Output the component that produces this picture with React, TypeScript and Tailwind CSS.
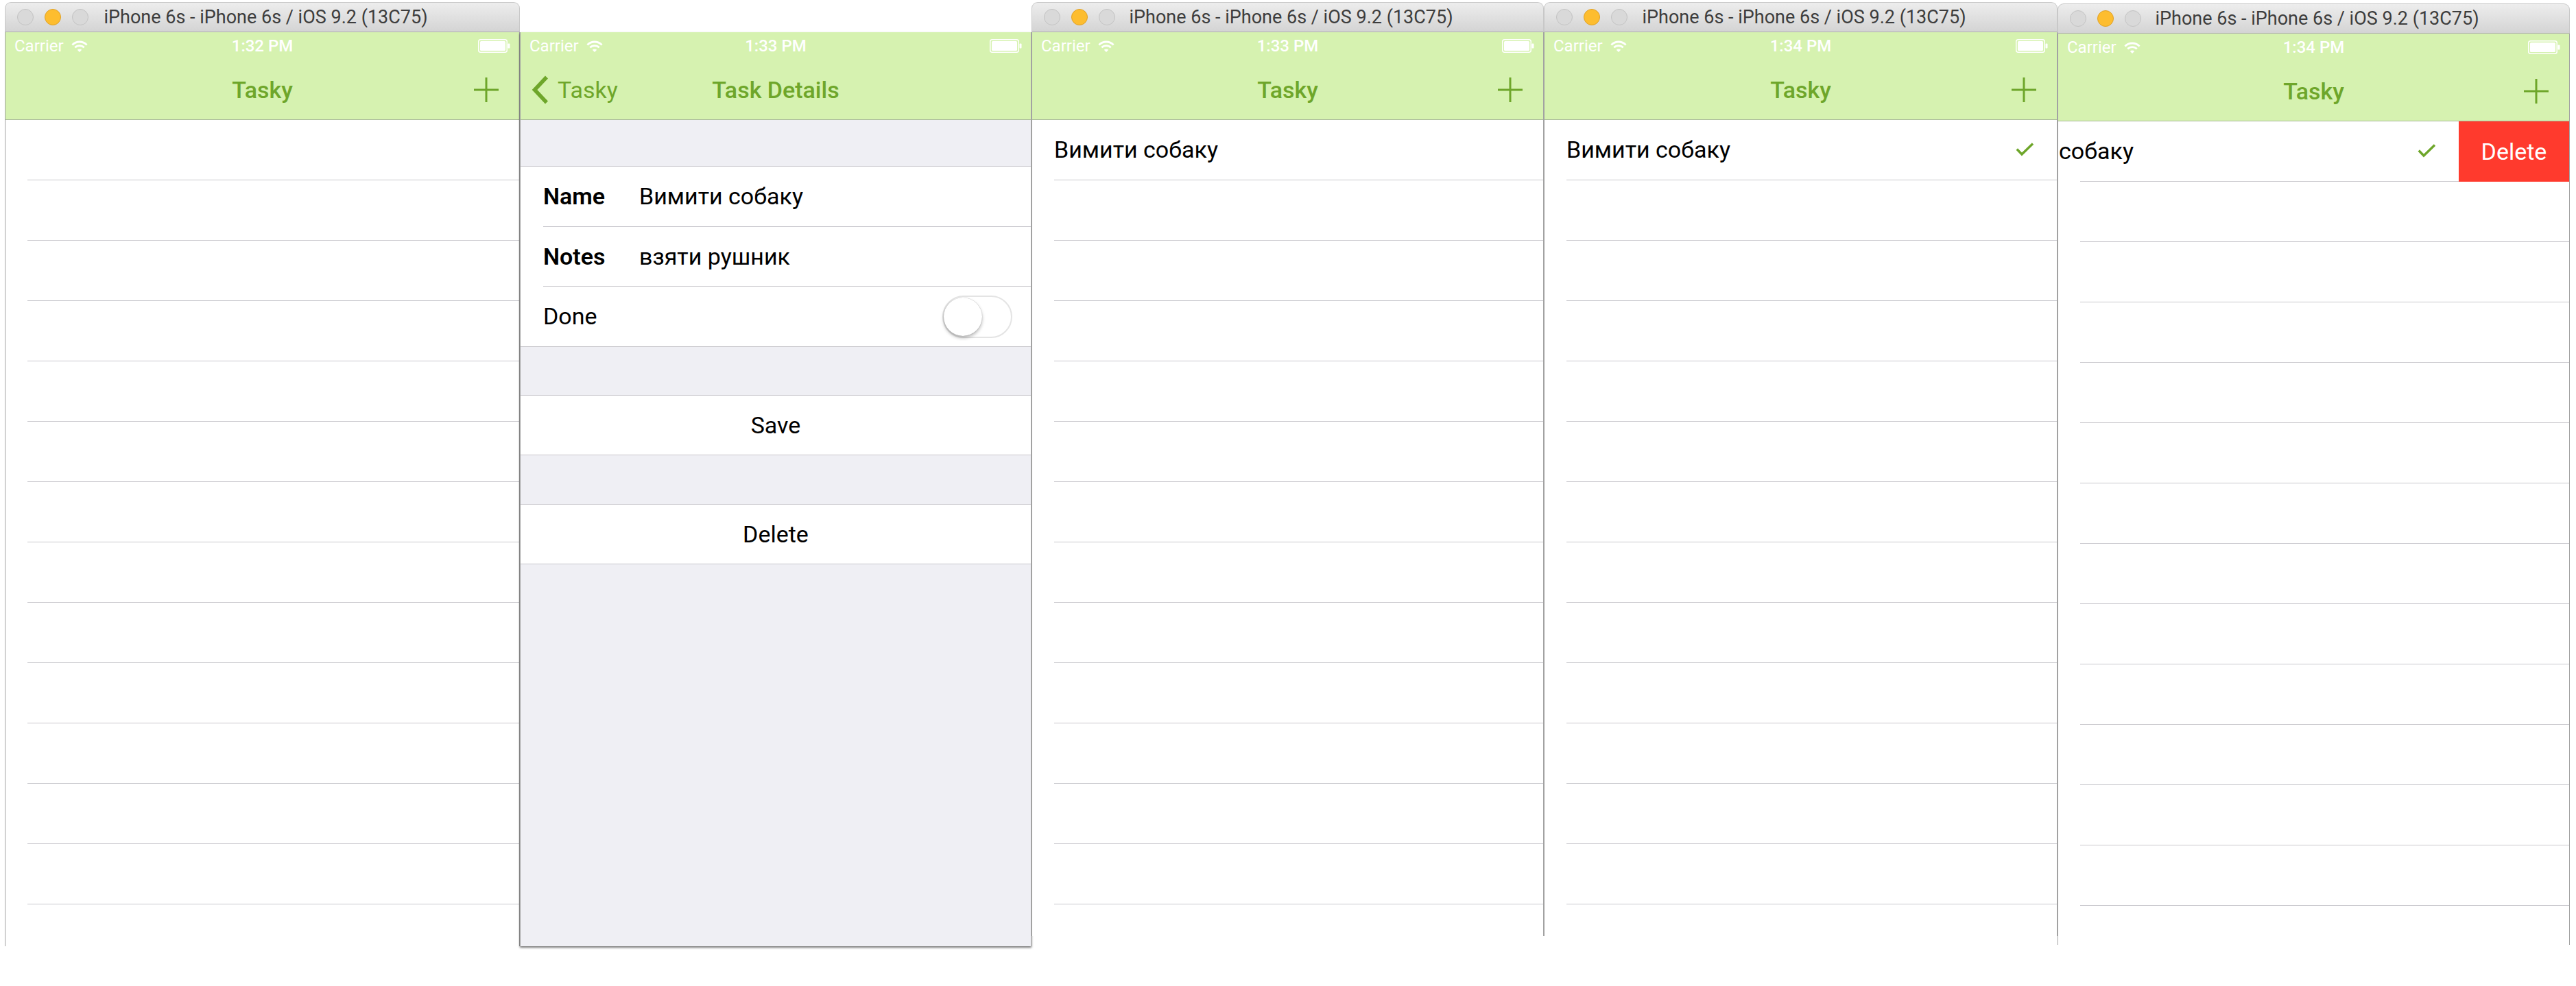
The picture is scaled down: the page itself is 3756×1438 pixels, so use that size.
import React from "react";

const SANS = "font-['Roboto','Liberation_Sans',sans-serif]";

function TrafficLights() {
  return (
    <div className="flex items-center gap-[16px]">
      <span className="block h-[24px] w-[24px] rounded-full border border-[#c3c3c3] bg-[#d9d9d9]" />
      <span className="block h-[24px] w-[24px] rounded-full border border-[#dfa127] bg-[#fdbd2f]" />
      <span className="block h-[24px] w-[24px] rounded-full border border-[#c3c3c3] bg-[#d9d9d9]" />
    </div>
  );
}

function TitleBar() {
  return (
    <div className="flex h-[44px] items-center rounded-t-[9px] border border-[#c8c8c8] border-b-[#afafaf] bg-gradient-to-b from-[#ededed] to-[#d4d4d4]">
      <div className="w-[140px] shrink-0 pl-[17px]">
        <TrafficLights />
      </div>
      <div className="flex-1 whitespace-nowrap pr-[130px] text-center text-[27px] leading-[32px] text-[#3d3d3d]">
        iPhone 6s - iPhone 6s / iOS 9.2 (13C75)
      </div>
    </div>
  );
}

function Wifi() {
  return (
    <svg width="24" height="17" viewBox="0 0 24 17">
      <path d="M1.4 6.4 A15 15 0 0 1 22.6 6.4" fill="none" stroke="#fff" strokeWidth="2.8" />
      <path d="M5.3 10.3 A9.5 9.5 0 0 1 18.7 10.3" fill="none" stroke="#fff" strokeWidth="2.8" />
      <path d="M12 17 L8.8 13.8 A4.5 4.5 0 0 1 15.2 13.8 Z" fill="#fff" />
    </svg>
  );
}

function Battery() {
  return (
    <svg width="47" height="20" viewBox="0 0 47 20">
      <rect x="0.75" y="0.75" width="41.5" height="18.5" rx="3" fill="none" stroke="#fff" strokeWidth="1.5" />
      <rect x="3" y="3" width="37" height="14" rx="1.5" fill="#fff" />
      <rect x="43.5" y="6.5" width="3" height="7" rx="1" fill="#fff" />
    </svg>
  );
}

function StatusBar({ time }: { time: string }) {
  return (
    <div className="grid h-[40px] grid-cols-3 items-center px-[13px] text-[24px] leading-none text-white">
      <div className="flex items-center gap-[11px]">
        <span>Carrier</span>
        <Wifi />
      </div>
      <div className="text-center font-medium">{time}</div>
      <div className="justify-self-end">
        <Battery />
      </div>
    </div>
  );
}

function Plus() {
  return (
    <svg width="36" height="36" viewBox="0 0 36 36">
      <path d="M18 0 V36 M0 18 H36" stroke="#6ea62a" strokeWidth="3" />
    </svg>
  );
}

function Chevron() {
  return (
    <svg width="26" height="42" viewBox="0 0 26 42">
      <path d="M22 2.5 L4.5 21 L22 39.5" fill="none" stroke="#6ea62a" strokeWidth="5.5" />
    </svg>
  );
}

function Check() {
  return (
    <svg width="27" height="21" viewBox="0 0 27 21">
      <path d="M1.8 9.5 L9 17 L25 1.5" fill="none" stroke="#6ea62a" strokeWidth="3.4" />
    </svg>
  );
}

function NavBar({ title, back }: { title: string; back?: boolean }) {
  return (
    <div className="grid h-[88px] grid-cols-[1fr_auto_1fr] items-center border-b border-[#a9b89a]">
      <div>
        {back && (
          <div className="flex items-center gap-[12px] pl-[16px] text-[34px] leading-none text-[#6ea62a]">
            <Chevron />
            <span>Tasky</span>
          </div>
        )}
      </div>
      <div className="text-[34px] font-medium leading-none text-[#6ea62a]">{title}</div>
      <div className="justify-self-end pr-[30px]">{!back && <Plus />}</div>
    </div>
  );
}

function Header({ time, title, back }: { time: string; title: string; back?: boolean }) {
  return (
    <div className="bg-[#d6f2b0]">
      <StatusBar time={time} />
      <NavBar title={title} back={back} />
    </div>
  );
}

function EmptyRows({ count }: { count: number }) {
  return (
    <>
      {Array.from({ length: count }).map((_, i) => (
        <div key={i} className="ml-[32px] h-[88px] shrink-0 border-b border-[#c8c7cc]" />
      ))}
    </>
  );
}

function TaskRow({ done }: { done?: boolean }) {
  return (
    <div className="ml-[32px] flex h-[88px] shrink-0 items-center justify-between border-b border-[#c8c7cc] pr-[33px] text-[34px] text-black">
      <span>Вимити собаку</span>
      {done && <Check />}
    </div>
  );
}

function SwipedRow() {
  return (
    <div className="flex h-[88px] shrink-0 overflow-hidden">
      <div className="-ml-[161px] flex w-full shrink-0 flex-col bg-white">
        <div className="flex h-[87px] items-center justify-between pl-[32px] pr-[33px] text-[34px] text-black">
          <span>Вимити собаку</span>
          <Check />
        </div>
        <div className="ml-[193px] h-px bg-[#c8c7cc]" />
      </div>
      <div className="flex w-[161px] shrink-0 items-center justify-center bg-[#ff3a2d] text-[34px] text-white">
        Delete
      </div>
    </div>
  );
}

function Screen({
  children,
  height,
  className = "",
}: {
  children: React.ReactNode;
  height: string;
  className?: string;
}) {
  return (
    <div className={`flex flex-col overflow-hidden border-x border-[#a2a2a2] ${height} ${className}`}>
      {children}
    </div>
  );
}

function SwitchOff() {
  return (
    <div className="flex h-[62px] w-[102px] items-center rounded-full border-[2px] border-[#e4e4e4] bg-white">
      <div className="h-[56px] w-[56px] rounded-full bg-white shadow-[0_3px_5px_rgba(0,0,0,0.28),0_0_1px_rgba(0,0,0,0.35)]" />
    </div>
  );
}

function DetailScreen() {
  return (
    <Screen height="h-[1333px]" className="bg-[#efeff4] shadow-[0_2px_3px_rgba(0,0,0,0.55)]">
      <Header time="1:33 PM" title="Task Details" back />
      <div className="h-[67px] shrink-0" />
      <div className="shrink-0 border-y border-[#c8c7cc] bg-white text-[34px] text-black">
        <div className="flex h-[87px] items-center pl-[33px]">
          <span className="w-[140px] font-semibold">Name</span>
          <span>Вимити собаку</span>
        </div>
        <div className="ml-[33px] h-px bg-[#c8c7cc]" />
        <div className="flex h-[86px] items-center pl-[33px]">
          <span className="w-[140px] font-semibold">Notes</span>
          <span>взяти рушник</span>
        </div>
        <div className="ml-[33px] h-px bg-[#c8c7cc]" />
        <div className="flex h-[87px] items-center justify-between pl-[33px] pr-[27px]">
          <span>Done</span>
          <SwitchOff />
        </div>
      </div>
      <div className="h-[70px] shrink-0" />
      <div className="flex h-[88px] shrink-0 items-center justify-center border-y border-[#c8c7cc] bg-white text-[34px] text-black">
        Save
      </div>
      <div className="h-[71px] shrink-0" />
      <div className="flex h-[88px] shrink-0 items-center justify-center border-y border-[#c8c7cc] bg-white text-[34px] text-black">
        Delete
      </div>
    </Screen>
  );
}

export default function App() {
  return (
    <div className={`flex h-[1438px] w-[3756px] items-start overflow-hidden bg-white pl-[7px] ${SANS}`}>
      {/* list, empty */}
      <div className="mt-[3px] w-[751px] shrink-0">
        <TitleBar />
        <Screen height="h-[1333px]" className="bg-white">
          <Header time="1:32 PM" title="Tasky" />
          <EmptyRows count={14} />
        </Screen>
      </div>

      {/* task details */}
      <div className="mt-[47px] w-[746px] shrink-0">
        <DetailScreen />
      </div>

      {/* list with one task */}
      <div className="mt-[3px] w-[747px] shrink-0">
        <TitleBar />
        <Screen height="h-[1318px]" className="bg-white">
          <Header time="1:33 PM" title="Tasky" />
          <TaskRow />
          <EmptyRows count={13} />
        </Screen>
      </div>

      {/* task done */}
      <div className="mt-[3px] w-[749px] shrink-0">
        <TitleBar />
        <Screen height="h-[1318px]" className="bg-white">
          <Header time="1:34 PM" title="Tasky" />
          <TaskRow done />
          <EmptyRows count={13} />
        </Screen>
      </div>

      {/* swipe to delete */}
      <div className="mt-[5px] w-[747px] shrink-0">
        <TitleBar />
        <Screen height="h-[1329px]" className="bg-white">
          <Header time="1:34 PM" title="Tasky" />
          <SwipedRow />
          <EmptyRows count={13} />
        </Screen>
      </div>
    </div>
  );
}
